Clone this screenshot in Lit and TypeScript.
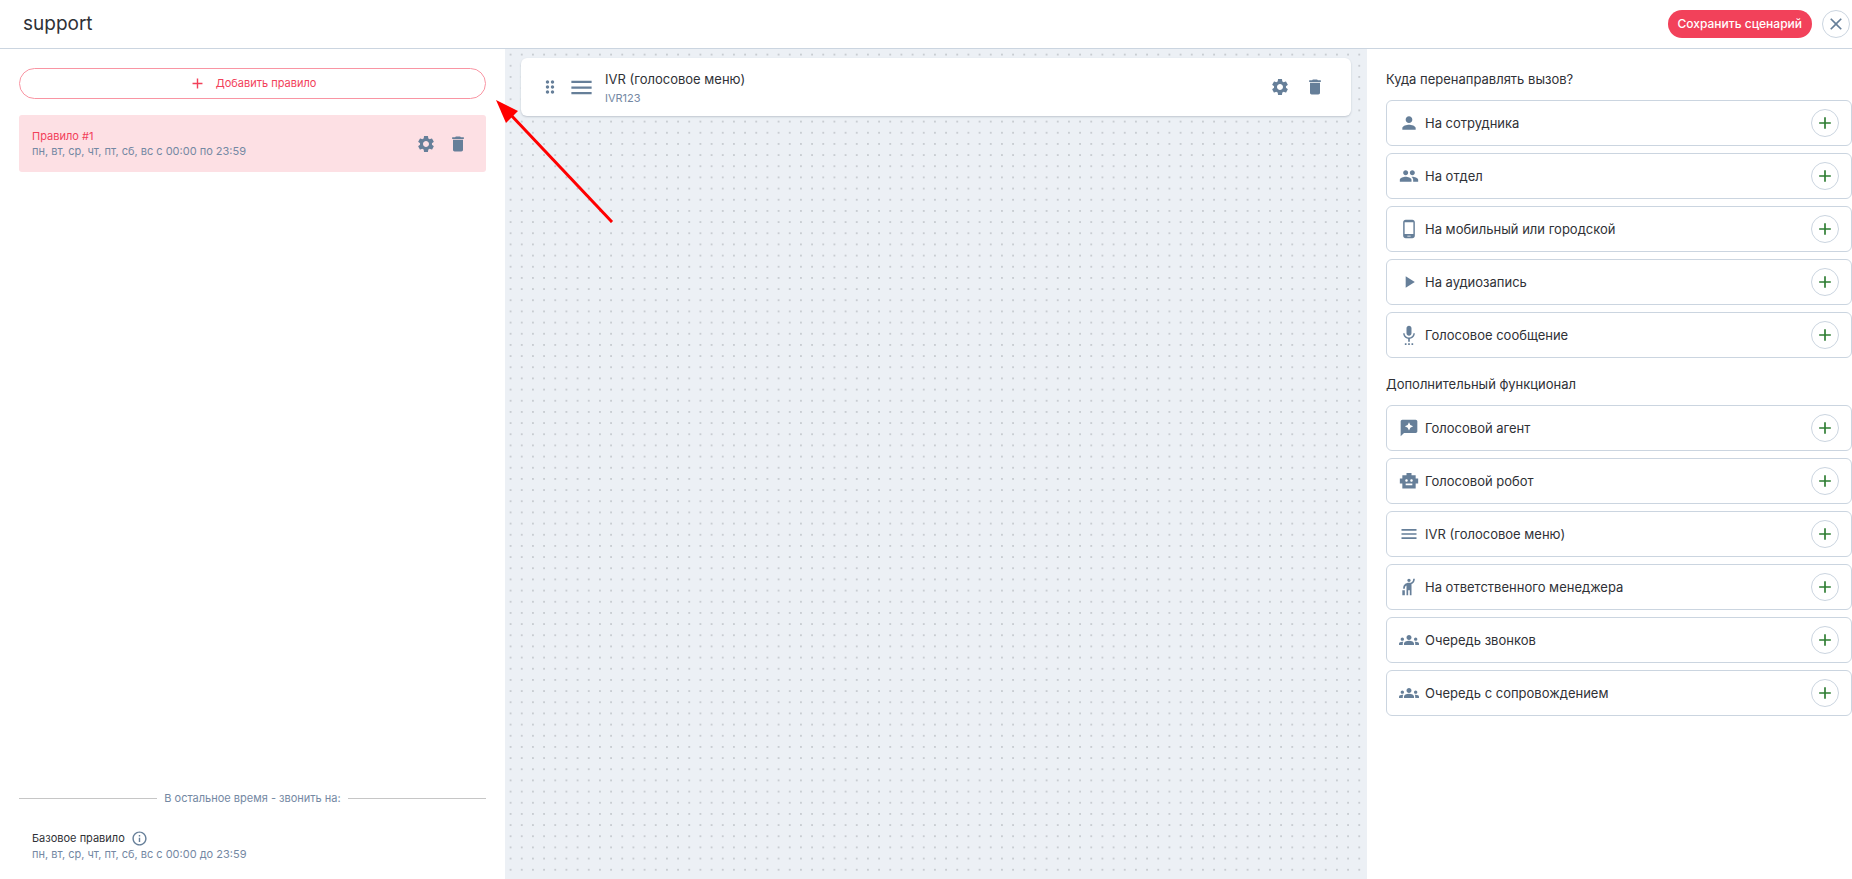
import { LitElement, html, css, svg } from 'lit';
import { customElement, property } from 'lit/decorators.js';

const ICONS: Record<string, string> = {
  add: 'M19 13h-6v6h-2v-6H5v-2h6V5h2v6h6v2z',
  close:
    'M19 6.41 17.59 5 12 10.59 6.41 5 5 6.41 10.59 12 5 17.59 6.41 19 12 13.41 17.59 19 19 17.59 13.41 12z',
  settings:
    'M19.14 12.94c.04-.3.06-.61.06-.94 0-.32-.02-.64-.07-.94l2.03-1.58c.18-.14.23-.41.12-.61l-1.92-3.32c-.12-.22-.37-.29-.59-.22l-2.39.96c-.5-.38-1.03-.7-1.62-.94l-.36-2.54c-.04-.24-.24-.41-.48-.41h-3.84c-.24 0-.43.17-.47.41l-.36 2.54c-.59.24-1.13.57-1.62.94l-2.39-.96c-.22-.08-.47 0-.59.22L2.74 8.87c-.12.21-.08.47.12.61l2.03 1.58c-.05.3-.09.63-.09.94s.02.64.07.94l-2.03 1.58c-.18.14-.23.41-.12.61l1.92 3.32c.12.22.37.29.59.22l2.39-.96c.5.38 1.03.7 1.62.94l.36 2.54c.05.24.24.41.48.41h3.84c.24 0 .44-.17.47-.41l.36-2.54c.59-.24 1.13-.56 1.62-.94l2.39.96c.22.08.47 0 .59-.22l1.92-3.32c.12-.22.07-.47-.12-.61l-2.01-1.58zM12 15.6c-1.98 0-3.6-1.62-3.6-3.6s1.62-3.6 3.6-3.6 3.6 1.62 3.6 3.6-1.62 3.6-3.6 3.6z',
  trash: 'M6 19c0 1.1.9 2 2 2h8c1.1 0 2-.9 2-2V7H6v12zM19 4h-3.5l-1-1h-5l-1 1H5v2h14V4z',
  drag:
    'M11 18c0 1.1-.9 2-2 2s-2-.9-2-2 .9-2 2-2 2 .9 2 2zm-2-8c-1.1 0-2 .9-2 2s.9 2 2 2 2-.9 2-2-.9-2-2-2zm0-6c-1.1 0-2 .9-2 2s.9 2 2 2 2-.9 2-2-.9-2-2-2zm6 4c1.1 0 2-.9 2-2s-.9-2-2-2-2 .9-2 2 .9 2 2 2zm0 2c-1.1 0-2 .9-2 2s.9 2 2 2 2-.9 2-2-.9-2-2-2zm0 6c-1.1 0-2 .9-2 2s.9 2 2 2 2-.9 2-2-.9-2-2-2z',
  menu: 'M3 18h18v-2H3v2zm0-5h18v-2H3v2zm0-7v2h18V6H3z',
  info:
    'M11 7h2v2h-2zm0 4h2v6h-2zm1-9C6.48 2 2 6.48 2 12s4.48 10 10 10 10-4.48 10-10S17.52 2 12 2zm0 18c-4.41 0-8-3.59-8-8s3.59-8 8-8 8 3.59 8 8-3.59 8-8 8z',
  person:
    'M12 12c2.21 0 4-1.79 4-4s-1.79-4-4-4-4 1.79-4 4 1.79 4 4 4zm0 2c-2.67 0-8 1.34-8 4v2h16v-2c0-2.66-5.33-4-8-4z',
  group:
    'M16 11c1.66 0 2.99-1.34 2.99-3S17.66 5 16 5c-1.66 0-3 1.34-3 3s1.34 3 3 3zm-8 0c1.66 0 2.99-1.34 2.99-3S9.66 5 8 5C6.34 5 5 6.34 5 8s1.34 3 3 3zm0 2c-2.33 0-7 1.17-7 3.5V19h14v-2.5c0-2.33-4.67-3.5-7-3.5zm8 0c-.29 0-.62.02-.97.05 1.16.84 1.97 1.97 1.97 3.45V19h6v-2.5c0-2.33-4.67-3.5-7-3.5z',
  phone:
    'M16 1H8C6.34 1 5 2.34 5 4v16c0 1.66 1.34 3 3 3h8c1.66 0 3-1.34 3-3V4c0-1.66-1.34-3-3-3zm-2 20h-4v-1h4v1zm3.25-3H6.75V4h10.5v14z',
  play: 'M8 5v14l11-7z',
  voice:
    'M12 13c1.66 0 2.99-1.34 2.99-3L15 4c0-1.66-1.34-3-3-3S9 2.34 9 4v6c0 1.66 1.34 3 3 3zm-1 9h2v2h-2v-2zm-4 0h2v2H7v-2zm8 0h2v2h-2v-2zm4-12h-1.7c0 3-2.54 5.1-5.3 5.1S6.7 13 6.7 10H5c0 3.41 2.72 6.23 6 6.72V20h2v-3.28c3.28-.48 6-3.3 6-6.72z',
  agent:
    'M20 2H4c-1.1 0-2 .9-2 2v18l4-4h14c1.1 0 2-.9 2-2V4c0-1.1-.9-2-2-2zm-6.43 9.57L12 15l-1.57-3.43L7 10l3.43-1.57L12 5l1.57 3.43L17 10l-3.43 1.57z',
  robot:
    'M20 9V5h-5V2.5H9V5H4v4H1v6h3v6h16v-6h3V9h-3zM7.5 11.5c0-.83.67-1.5 1.5-1.5s1.5.67 1.5 1.5S9.83 13 9 13s-1.5-.67-1.5-1.5zM16 17H8v-2h8v2zm-1-4c-.83 0-1.5-.67-1.5-1.5S14.17 10 15 10s1.5.67 1.5 1.5S15.83 13 15 13z',
  hail:
    'M12 6c-1.1 0-2-.9-2-2s.9-2 2-2 2 .9 2 2-.9 2-2 2zm5-4h2v.4c-.1 2.2-.8 3.9-2.3 5.1-.5.4-1.1.7-1.7.9V22h-2v-6h-2v6H9V10.1c-.3.1-.5.2-.6.3-.9.7-1.4 1.6-1.4 3.5v.1H5v-.5c0-2.1.7-3.7 2-4.7C8.3 7.6 9.7 7 12 7s2.7-.5 3.5-1.1c1-.8 1.4-1.8 1.5-3.5V2zM4 16h3v6H4v-6z',
  groups:
    'M12 12.75c1.63 0 3.07.39 4.24.9 1.08.48 1.76 1.56 1.76 2.73V18H6v-1.61c0-1.18.68-2.26 1.76-2.73 1.17-.52 2.61-.91 4.24-.91zM4 13c1.1 0 2-.9 2-2s-.9-2-2-2-2 .9-2 2 .9 2 2 2zm1.13 1.1c-.37-.06-.74-.1-1.13-.1-.99 0-1.93.21-2.78.58C.48 14.9 0 15.62 0 16.43V18h4.5v-1.61c0-.83.23-1.61.63-2.29zM20 13c1.1 0 2-.9 2-2s-.9-2-2-2-2 .9-2 2 .9 2 2 2zm4 3.43c0-.81-.48-1.53-1.22-1.85-.85-.37-1.79-.58-2.78-.58-.39 0-.76.04-1.13.1.4.68.63 1.46.63 2.29V18H24v-1.57zM12 6c1.66 0 3 1.34 3 3s-1.34 3-3 3-3-1.34-3-3 1.34-3 3-3z',
};

@customElement('ui-icon')
export class UiIcon extends LitElement {
  static styles = css`
    :host { display: inline-flex; flex: none; width: 20px; height: 20px; }
    .glyph { width: 100%; height: 100%; fill: currentColor; }
  `;
  @property() name = '';
  render() {
    return html`<svg class="glyph" viewBox="0 0 24 24" aria-hidden="true">
      ${svg`<path d=${ICONS[this.name] ?? ''}></path>`}
    </svg>`;
  }
}

interface Step {
  icon: string;
  label: string;
}

const SECTIONS: { title: string; steps: Step[] }[] = [
  {
    title: 'Куда перенаправлять вызов?',
    steps: [
      { icon: 'person', label: 'На сотрудника' },
      { icon: 'group', label: 'На отдел' },
      { icon: 'phone', label: 'На мобильный или городской' },
      { icon: 'play', label: 'На аудиозапись' },
      { icon: 'voice', label: 'Голосовое сообщение' },
    ],
  },
  {
    title: 'Дополнительный функционал',
    steps: [
      { icon: 'agent', label: 'Голосовой агент' },
      { icon: 'robot', label: 'Голосовой робот' },
      { icon: 'menu', label: 'IVR (голосовое меню)' },
      { icon: 'hail', label: 'На ответственного менеджера' },
      { icon: 'groups', label: 'Очередь звонков' },
      { icon: 'groups', label: 'Очередь с сопровождением' },
    ],
  },
];

@customElement('app-root')
export class AppRoot extends LitElement {
  static styles = css`
    :host {
      --slate: #667f99;
      --muted: #7488a3;
      --line: #cbd5e0;
      --red: #f2415a;
      --ink: #2f3136;
      position: relative;
      display: flex;
      flex-direction: column;
      min-height: 100vh;
      background: #fff;
      color: var(--ink);
      font: 400 13px/18px Inter, "Open Sans", sans-serif;
    }
    *, *::before, *::after { box-sizing: border-box; }
    h1, h2, h3, p, ul { margin: 0; padding: 0; font: inherit; }
    ul { list-style: none; }
    button {
      display: inline-flex;
      align-items: center;
      justify-content: center;
      flex: none;
      margin: 0;
      padding: 0;
      border: 0;
      background: none;
      color: inherit;
      font: inherit;
      cursor: pointer;
    }

    .header {
      display: flex;
      align-items: center;
      gap: 10px;
      min-height: 49px;
      padding: 0 2px 1px 23px;
      border-bottom: 1px solid var(--line);
    }
    .header .title { flex: 1; font-size: 19px; line-height: 24px; }
    .save {
      height: 28px;
      padding: 0 10px;
      border-radius: 14px;
      background: var(--red);
      color: #fff;
      font-size: 12px;
      font-weight: 500;
    }
    .round {
      width: 28px;
      height: 28px;
      border: 1px solid var(--line);
      border-radius: 50%;
      color: var(--slate);
    }
    .round.plus { color: #2e7d32; }

    .body {
      flex: 1;
      display: grid;
      grid-template-columns: 505px minmax(0, 1fr) 485px;
    }

    .rules {
      display: flex;
      flex-direction: column;
      gap: 16px;
      padding: 19px 19px 17px;
      font-size: 11px;
      line-height: 15px;
    }
    .add-rule {
      gap: 10px;
      height: 31px;
      border: 1px solid #f995a3;
      border-radius: 16px;
      color: var(--red);
      font-size: 11px;
    }
    .add-rule ui-icon { width: 17px; height: 17px; }
    .rule {
      display: flex;
      align-items: center;
      gap: 12px;
      min-height: 57px;
      padding: 0 18px 0 13px;
      border-radius: 3px;
      background: #fde0e4;
    }
    .grow { flex: 1; min-width: 0; }
    .rule-name { color: var(--red); }
    .muted { color: var(--muted); }
    .tool { color: var(--slate); }
    .rest { display: flex; flex-direction: column; gap: 24px; margin-top: auto; }
    .divider { display: flex; align-items: center; gap: 7px; color: var(--muted); }
    .divider::before, .divider::after {
      content: "";
      flex: 1;
      height: 1px;
      background: #c6c6c6;
    }
    .base { padding: 0 13px; }
    .base-name { display: flex; align-items: center; gap: 6px; }
    .base-name ui-icon { width: 17px; height: 17px; color: var(--slate); }

    .canvas {
      padding: 9px 16px;
      background-color: #ecf0f5;
      background-image: url("data:image/svg+xml,%3Csvg xmlns='http://www.w3.org/2000/svg' viewBox='0 0 60 60'%3E%3Cdefs%3E%3Cpattern id='d' width='10' height='10' patternUnits='userSpaceOnUse'%3E%3Ccircle cx='5' cy='5' r='.9' fill='%23c0c4c9'/%3E%3C/pattern%3E%3C/defs%3E%3Crect width='60' height='60' fill='url(%23d)'/%3E%3C/svg%3E");
      background-size: 67px 67px;
    }
    .node {
      display: flex;
      align-items: center;
      gap: 15px;
      min-height: 58px;
      padding: 0 26px 0 19px;
      border-radius: 6px;
      background: #fff;
      box-shadow: 0 1px 2px rgba(60, 75, 95, 0.25);
    }
    .node-main { display: flex; align-items: center; gap: 10px; flex: 1; }
    .lead { display: flex; align-items: center; gap: 8px; color: var(--slate); }
    .lead .kind { width: 27px; height: 27px; }
    .node-text { padding-top: 3px; }
    .node-text .muted { font-size: 11px; line-height: 20px; }

    .palette {
      display: flex;
      flex-direction: column;
      gap: 17px;
      padding: 21px 0 21px 19px;
    }
    .section { display: flex; flex-direction: column; gap: 12px; }
    .steps { display: flex; flex-direction: column; gap: 7px; }
    .step {
      display: flex;
      align-items: center;
      gap: 6px;
      min-height: 46px;
      padding: 0 12px;
      border: 1px solid var(--line);
      border-radius: 6px;
    }

    .pointer {
      position: absolute;
      left: 496px;
      top: 100px;
      width: 120px;
      height: 125px;
      pointer-events: none;
    }
  `;

  render() {
    return html`
      <header class="header">
        <h1 class="title">support</h1>
        <button class="save" type="button">Сохранить сценарий</button>
        <button class="round" type="button" aria-label="Закрыть"><ui-icon name="close"></ui-icon></button>
      </header>
      <main class="body">
        <section class="rules">
          <button class="add-rule" type="button"><ui-icon name="add"></ui-icon>Добавить правило</button>
          <article class="rule">
            <div class="grow">
              <h3 class="rule-name">Правило #1</h3>
              <p class="muted">пн, вт, ср, чт, пт, сб, вс с 00:00 по 23:59</p>
            </div>
            <button class="tool" type="button" aria-label="Настроить"><ui-icon name="settings"></ui-icon></button>
            <button class="tool" type="button" aria-label="Удалить"><ui-icon name="trash"></ui-icon></button>
          </article>
          <div class="rest">
            <p class="divider">В остальное время - звонить на:</p>
            <div class="base">
              <h3 class="base-name">Базовое правило<ui-icon name="info"></ui-icon></h3>
              <p class="muted">пн, вт, ср, чт, пт, сб, вс с 00:00 до 23:59</p>
            </div>
          </div>
        </section>
        <section class="canvas">
          <article class="node">
            <div class="node-main">
              <div class="lead">
                <ui-icon name="drag"></ui-icon>
                <ui-icon class="kind" name="menu"></ui-icon>
              </div>
              <div class="node-text">
                <h3>IVR (голосовое меню)</h3>
                <p class="muted">IVR123</p>
              </div>
            </div>
            <button class="tool" type="button" aria-label="Настроить"><ui-icon name="settings"></ui-icon></button>
            <button class="tool" type="button" aria-label="Удалить"><ui-icon name="trash"></ui-icon></button>
          </article>
        </section>
        <aside class="palette">
          ${SECTIONS.map(
            (section) => html`
              <section class="section">
                <h2>${section.title}</h2>
                <ul class="steps">
                  ${section.steps.map(
                    (step) => html`
                      <li class="step">
                        <ui-icon class="tool" name=${step.icon}></ui-icon>
                        <span class="grow">${step.label}</span>
                        <button class="round plus" type="button" aria-label="Добавить: ${step.label}">
                          <ui-icon name="add"></ui-icon>
                        </button>
                      </li>
                    `,
                  )}
                </ul>
              </section>
            `,
          )}
        </aside>
      </main>
      <svg class="pointer" viewBox="0 0 120 125" aria-hidden="true">
        <path d="M14 14 116 122" stroke="#f00" stroke-width="3" fill="none" />
        <path d="M0 0 22 11 10 23z" fill="#f00" />
      </svg>
    `;
  }
}
